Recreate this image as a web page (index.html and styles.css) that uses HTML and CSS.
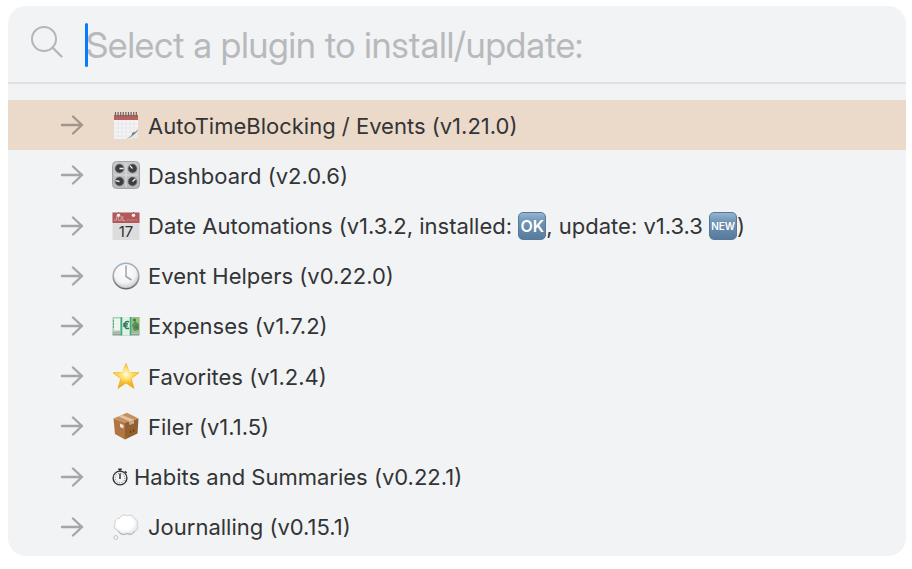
FILE: index.html
```html
<!DOCTYPE html>
<html lang="en">
<head>
    <meta charset="UTF-8">
    <meta name="viewport" content="width=device-width, initial-scale=1.0">
    <title>Plugins</title>
    <link rel="stylesheet" href="styles.css">
</head>
<body>
    <!-- shared shapes -->
    <svg class="defs" aria-hidden="true">
        <defs>
            <symbol id="arrow" viewBox="0 0 24 20">
                <path d="M2 10H22M13 1.5L22 10L13 18.5" fill="none" stroke="currentColor" stroke-width="2.4" stroke-linecap="round" stroke-linejoin="round"/>
            </symbol>
            <linearGradient id="dial" x1="0" y1="0" x2="0" y2="1">
                <stop offset="0" stop-color="#c8cbcc"/>
                <stop offset="1" stop-color="#b6b8b9"/>
            </linearGradient>
            <radialGradient id="face" cx="0.45" cy="0.35" r="0.65">
                <stop offset="0" stop-color="#ffffff"/>
                <stop offset="0.65" stop-color="#f2f3f4"/>
                <stop offset="1" stop-color="#c3c6c9"/>
            </radialGradient>
            <linearGradient id="rim" x1="0" y1="0" x2="0" y2="1">
                <stop offset="0" stop-color="#9fb2c6"/>
                <stop offset="0.5" stop-color="#a9a9aa"/>
                <stop offset="1" stop-color="#66686a"/>
            </linearGradient>
            <linearGradient id="gold" x1="0" y1="0" x2="0" y2="1">
                <stop offset="0" stop-color="#ffdf5a"/>
                <stop offset="0.6" stop-color="#ffd23f"/>
                <stop offset="1" stop-color="#e99a0c"/>
            </linearGradient>
            <radialGradient id="shine" cx="0.5" cy="0.4" r="0.5">
                <stop offset="0" stop-color="#fffbe0"/>
                <stop offset="1" stop-color="#fff3a8" stop-opacity="0"/>
            </radialGradient>
            <radialGradient id="cloud" cx="0.45" cy="0.4" r="0.6">
                <stop offset="0.6" stop-color="#ffffff"/>
                <stop offset="1" stop-color="#e2e4e6"/>
            </radialGradient>
            <linearGradient id="curl" x1="0" y1="0" x2="1" y2="1">
                <stop offset="0.3" stop-color="#d8d8d8"/>
                <stop offset="0.5" stop-color="#555657"/>
                <stop offset="0.7" stop-color="#e9e9e9"/>
            </linearGradient>
        </defs>
    </svg>

    <main class="palette">
        <div class="search">
            <svg class="search-icon" viewBox="0 0 34 34" aria-hidden="true">
                <circle cx="14" cy="14" r="12" fill="none" stroke="currentColor" stroke-width="2"/>
                <path d="M22.5 22.5L31.5 31.5" stroke="currentColor" stroke-width="2.4" stroke-linecap="round"/>
            </svg>
            <div class="field">
                <input type="text" class="search-input" aria-label="Select a plugin" placeholder="Select a plugin to install/update:">
                <span class="caret"></span>
            </div>
        </div>

        <ul class="plugins">
            <li>
                <button type="button" class="plugin selected">
                    <svg class="arrow" aria-hidden="true"><use href="#arrow"/></svg>
                    <svg class="emoji" viewBox="0 0 28 28" aria-hidden="true">
                        <path d="M2 4H26V19L19 28H2Z" fill="#f4f4f5"/>
                        <path d="M2 13H26M2 17H26M2 21H24M2 25H21M6 9V28M10 9V28M14 9V28M18 9V28M22 9V23" stroke="#dfe0e3" stroke-width="0.6"/>
                        <path d="M26 18V27.5H15C20 26 21 23 22 21C23 19.5 25 19 26 18Z" fill="#e8e8e8"/>
                        <path d="M14.5 27.5C18.5 26.5 20 24 20.5 21.5C22.5 22 25 20 26 18C25.5 22 19.5 27.5 14.5 27.5Z" fill="url(#curl)"/>
                        <path d="M2 4H26V9H2Z" fill="#b9605d"/>
                        <path d="M3.5 1V5.5M6.1 1V5.5M8.7 1V5.5M11.3 1V5.5M13.9 1V5.5M16.5 1V5.5M19.1 1V5.5M21.7 1V5.5M24.3 1V5.5" stroke="#686463" stroke-width="1.2"/>
                    </svg>
                    <span class="label">AutoTimeBlocking / Events (v1.21.0)</span>
                </button>
            </li>
            <li>
                <button type="button" class="plugin">
                    <svg class="arrow" aria-hidden="true"><use href="#arrow"/></svg>
                    <svg class="emoji" viewBox="0 0 28 28" aria-hidden="true">
                        <rect x="0.5" y="0.5" width="27" height="27" rx="4" fill="url(#dial)" stroke="#a3a6a7"/>
                        <path d="M14 2V26M2 14H26" stroke="#d9dbdc" stroke-width="1.2"/>
                        <g fill="#3c3e40" stroke="#77797a" stroke-width="0.8">
                            <circle cx="7.5" cy="7.5" r="4.4"/>
                            <circle cx="20.5" cy="7.5" r="4.4"/>
                            <circle cx="7.5" cy="20.5" r="4.4"/>
                            <circle cx="20.5" cy="20.5" r="4.4"/>
                        </g>
                        <path d="M7.5 7.5H11.5M20.5 7.5L17.8 4.6M7.5 20.5L3.6 19.7M20.5 20.5L23.5 17.8" stroke="#f3f3f3" stroke-width="1.3"/>
                    </svg>
                    <span class="label">Dashboard (v2.0.6)</span>
                </button>
            </li>
            <li>
                <button type="button" class="plugin">
                    <svg class="arrow" aria-hidden="true"><use href="#arrow"/></svg>
                    <svg class="emoji" viewBox="0 0 28 28" aria-hidden="true">
                        <path d="M0.5 0.5H27.5V28H0.5Z" fill="#dcddde"/>
                        <path d="M0.5 0.5H27.5V11H0.5Z" fill="#b4595a"/>
                        <path d="M6.5 0V3M21.5 0V3" stroke="#8d4445" stroke-width="1"/>
                        <circle cx="6.5" cy="3.2" r="1.7" fill="#f6efed"/>
                        <circle cx="21.5" cy="3.2" r="1.7" fill="#f6efed"/>
                        <path d="M15 8H25" stroke="#c67f7f" stroke-width="1.5" stroke-dasharray="1.5 0.7"/>
                        <text x="2" y="9" class="cal-month">JUL</text>
                        <text x="14" y="25" class="cal-day">17</text>
                    </svg>
                    <span class="label">Date Automations (v1.3.2, installed: <span class="badge ok">OK</span>, update: v1.3.3 <span class="badge new">NEW</span>)</span>
                </button>
            </li>
            <li>
                <button type="button" class="plugin">
                    <svg class="arrow" aria-hidden="true"><use href="#arrow"/></svg>
                    <svg class="emoji" viewBox="0 0 28 28" aria-hidden="true">
                        <circle cx="14" cy="14" r="12.8" fill="url(#face)" stroke="url(#rim)" stroke-width="1.6"/>
                        <path d="M14 3.5V14.5L19.5 18" fill="none" stroke="#a1a4a6" stroke-width="1.5"/>
                    </svg>
                    <span class="label">Event Helpers (v0.22.0)</span>
                </button>
            </li>
            <li>
                <button type="button" class="plugin">
                    <svg class="arrow" aria-hidden="true"><use href="#arrow"/></svg>
                    <svg class="emoji" viewBox="0 0 28 28" aria-hidden="true">
                        <path d="M0.5 19.5H27.5V23.5H0.5Z" fill="#8c9b95"/>
                        <path d="M1 21.5H27" stroke="#cbd5cf" stroke-width="0.7"/>
                        <rect x="0.5" y="5" width="27" height="15.5" fill="#a9cfb0"/>
                        <path d="M2 6.5H8V18.5H2Z" fill="#eef4ee"/>
                        <path d="M1.5 8V17" stroke="#5aa47c" stroke-width="1" stroke-dasharray="2 1"/>
                        <path d="M19 5H27.5V20.5H19Z" fill="#9cbf82"/>
                        <path d="M20 13L23 9L27 12V18L22 19Z" fill="#5d914f"/>
                        <circle cx="22.5" cy="8" r="1.5" fill="#437747"/>
                        <circle cx="24.5" cy="15" r="1.8" fill="#48748a"/>
                        <path d="M9.5 5H18.5V23.5H9.5Z" fill="#dff0e5"/>
                        <path d="M9.5 5V23.5M18.5 5V23.5" stroke="#35ad80" stroke-width="1.5"/>
                        <path d="M17 9.8C14.5 8.6 12.7 10.3 12.7 13C12.7 15.7 14.5 17.4 17 16.2M11 12H16M11 14H15.5" fill="none" stroke="#31765a" stroke-width="1.5"/>
                    </svg>
                    <span class="label">Expenses (v1.7.2)</span>
                </button>
            </li>
            <li>
                <button type="button" class="plugin">
                    <svg class="arrow" aria-hidden="true"><use href="#arrow"/></svg>
                    <svg class="emoji" viewBox="0 0 28 28" aria-hidden="true">
                        <path d="M14 1.5L17.3 10.7H27L19.2 16.6L22 26.5L14 20.9L6 26.5L8.8 16.6L1 10.7H10.7Z" fill="url(#gold)" stroke="#eeb02b" stroke-width="0.8" stroke-linejoin="round"/>
                        <circle cx="14" cy="14" r="8.5" fill="url(#shine)"/>
                    </svg>
                    <span class="label">Favorites (v1.2.4)</span>
                </button>
            </li>
            <li>
                <button type="button" class="plugin">
                    <svg class="arrow" aria-hidden="true"><use href="#arrow"/></svg>
                    <svg class="emoji" viewBox="0 0 28 28" aria-hidden="true">
                        <path d="M1.5 6.5L13 10.5V27.5L3 22Z" fill="#b07540"/>
                        <path d="M13 10.5L26.5 6.5L25.5 21.5L13 27.5Z" fill="#94602f"/>
                        <path d="M1.5 6.5L15 0.8L26.5 6.5L13 10.5Z" fill="#c68f5c"/>
                        <path d="M6.5 4.4L10 3L22 7.8V11L17.5 12.4V9.2Z" fill="#e0c3a5"/>
                        <path d="M17.5 9.2L22 7.8V11.5L17.5 12.9Z" fill="#c9aa8b"/>
                        <path d="M8 11.5L11.5 13V16.5L8 15Z" fill="#e8e6e2"/>
                        <path d="M18.5 21V18.8M21.5 19.8V17.6" stroke="#5f3d1d" stroke-width="1.2"/>
                    </svg>
                    <span class="label">Filer (v1.1.5)</span>
                </button>
            </li>
            <li>
                <button type="button" class="plugin">
                    <svg class="arrow" aria-hidden="true"><use href="#arrow"/></svg>
                    <svg class="emoji small" viewBox="0 0 16 18" aria-hidden="true">
                        <circle cx="8" cy="10" r="6.9" fill="none" stroke="#333" stroke-width="1.4"/>
                        <circle cx="8" cy="10" r="4.8" fill="none" stroke="#555" stroke-width="1" stroke-dasharray="0.8 1.71"/>
                        <path d="M8 5.5V11M6.2 1.2H9.8M8 1V3.5M12.8 3.2L14.6 5" stroke="#333" stroke-width="1.5"/>
                    </svg>
                    <span class="label">Habits and Summaries (v0.22.1)</span>
                </button>
            </li>
            <li>
                <button type="button" class="plugin">
                    <svg class="arrow" aria-hidden="true"><use href="#arrow"/></svg>
                    <svg class="emoji" viewBox="0 0 28 28" aria-hidden="true">
                        <path d="M6 17C2.5 17 0.8 13.5 3.3 11.3C1.8 8 4.5 5 7.5 5.5C8.8 2 13 1 15.2 3C18.5 1.2 22 3 22.5 5.7C25.5 6.5 26.3 9.5 25 11.7C27 14.5 25.5 18 22.5 18.3C21.5 21.5 17.5 22.5 15 20.7C11.5 22.8 6.5 21.5 6 17Z" fill="url(#cloud)" stroke="#c6c8ca" stroke-width="0.8"/>
                        <path d="M6.5 18C8 21.5 12 22 15 20.5C18 22 21.5 21 22.5 18.2" fill="none" stroke="#a8aaac" stroke-width="0.9"/>
                        <circle cx="3.8" cy="24.5" r="1.9" fill="#fafafa" stroke="#b1b3b5" stroke-width="0.8"/>
                    </svg>
                    <span class="label">Journalling (v0.15.1)</span>
                </button>
            </li>
        </ul>
    </main>
</body>
</html>
```
FILE: styles.css
```css
* {
    box-sizing: border-box;
    margin: 0;
    padding: 0;
}

body {
    font-family: Inter, "Liberation Sans", sans-serif;
    background: #fff;
    padding: 6px 6px 12px 8px;
}

.defs {
    position: absolute;
    width: 0;
    height: 0;
}

.palette {
    background: #f1f3f5;
    border-radius: 18px;
    overflow: hidden;
}

/* search bar */
.search {
    display: flex;
    align-items: center;
    gap: 22px;
    height: 78px;
    padding: 0 22px;
    border-bottom: 2px solid #dfe0e2;
}

.search-icon {
    width: 34px;
    height: 34px;
    margin-bottom: 4px;
    color: #b4b6b7;
    flex-shrink: 0;
}

.field {
    position: relative;
    flex: 1;
}

.search-input {
    display: block;
    width: 100%;
    height: 48px;
    padding-top: 2px;
    border: none;
    outline: none;
    background: none;
    font-family: "Inter Display", Inter, sans-serif;
    font-size: 36px;
    color: #333;
}

.search-input::placeholder {
    color: #b7b9ba;
    opacity: 1;
}

.caret {
    position: absolute;
    left: -1px;
    top: 3px;
    width: 3px;
    height: 44px;
    border-radius: 2px;
    background: #0a7aff;
}

/* plugin list */
.plugins {
    display: grid;
    grid-auto-rows: 1fr;
    min-height: 452px;
    margin: 16px 0 4px;
    list-style: none;
}

.plugins li {
    display: flex;
}

.plugin {
    display: flex;
    align-items: center;
    width: 100%;
    min-height: 50px;
    padding: 0 52px;
    border: none;
    background: none;
    font-family: inherit;
    font-size: 22px;
    line-height: 28px;
    color: #333435;
    text-align: left;
    white-space: nowrap;
    cursor: pointer;
}

.plugin.selected {
    background: #ebd9ca;
}

.arrow {
    width: 24px;
    height: 20px;
    margin-right: 28px;
    color: #a5a6a7;
    flex-shrink: 0;
}

.selected .arrow {
    color: #a3958b;
}

.emoji {
    width: 28px;
    height: 28px;
    margin-right: 8px;
    flex-shrink: 0;
}

.emoji.small {
    width: 16px;
    height: 18px;
    margin-right: 6px;
}

.label {
    padding-top: 1px;
}

.cal-month {
    font-size: 6px;
    fill: #e6c6c5;
}

.cal-day {
    font-size: 15px;
    text-anchor: middle;
    fill: #333;
}

.badge {
    display: inline-block;
    width: 28px;
    height: 28px;
    border: 1px solid #56799b;
    border-radius: 5px;
    background: linear-gradient(#94b4d2, #6f93b4 35%, #587b9c);
    color: #fff;
    font-weight: 600;
    line-height: 26px;
    text-align: center;
    vertical-align: top;
}

.badge.ok {
    font-size: 16px;
}

.badge.new {
    font-size: 10px;
}
```
